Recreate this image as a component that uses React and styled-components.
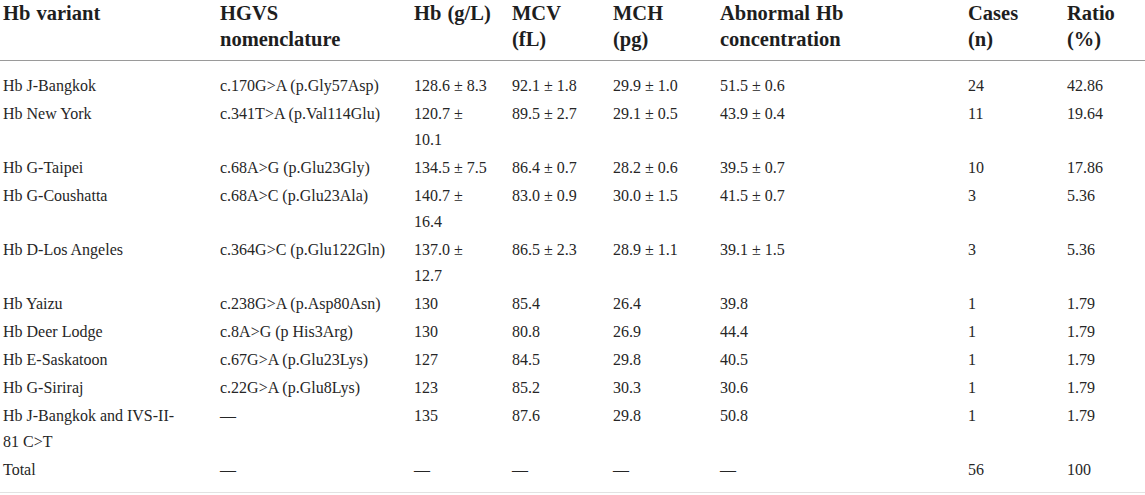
import React from "react";
import styled, { createGlobalStyle } from "styled-components";

const Global = createGlobalStyle`
  html, body { margin: 0; padding: 0; background: #fff; }
  body { font-family: "Liberation Serif", "Times New Roman", serif; }
`;

const Table = styled.table`
  width: 1145px;
  border-collapse: collapse;
  table-layout: fixed;
  color: #262626;
  border-bottom: 1px solid #e2e2e2;
`;

const Col = styled.col`
  width: ${(p) => p.$w}px;
`;

const HeadCell = styled.th`
  text-align: left;
  vertical-align: top;
  font-weight: 700;
  font-size: 20.5px;
  line-height: 26px;
  word-spacing: 1px;
  color: #1e1e1e;
  padding: 0 0 8px 3px;
  border-bottom: 1px solid #9a9a9a;
`;

const Row = styled.tr``;

const Cell = styled.td`
  vertical-align: top;
  font-size: 16px;
  line-height: 26px;
  padding: ${(p) => (p.$first ? "12px" : "1px")} 0 ${(p) => (p.$last ? "9px" : "1px")} 3px;
  white-space: nowrap;
`;

const widths = [217, 194, 98, 101, 107, 248, 99, 81];

const headers = [
  ["Hb variant"],
  ["HGVS", "nomenclature"],
  ["Hb (g/L)"],
  ["MCV", "(fL)"],
  ["MCH", "(pg)"],
  ["Abnormal Hb", "concentration"],
  ["Cases", "(n)"],
  ["Ratio", "(%)"],
];

const rows = [
  [["Hb J-Bangkok"], ["c.170G>A (p.Gly57Asp)"], ["128.6 ± 8.3"], ["92.1 ± 1.8"], ["29.9 ± 1.0"], ["51.5 ± 0.6"], ["24"], ["42.86"]],
  [["Hb New York"], ["c.341T>A (p.Val114Glu)"], ["120.7 ±", "10.1"], ["89.5 ± 2.7"], ["29.1 ± 0.5"], ["43.9 ± 0.4"], ["11"], ["19.64"]],
  [["Hb G-Taipei"], ["c.68A>G (p.Glu23Gly)"], ["134.5 ± 7.5"], ["86.4 ± 0.7"], ["28.2 ± 0.6"], ["39.5 ± 0.7"], ["10"], ["17.86"]],
  [["Hb G-Coushatta"], ["c.68A>C (p.Glu23Ala)"], ["140.7 ±", "16.4"], ["83.0 ± 0.9"], ["30.0 ± 1.5"], ["41.5 ± 0.7"], ["3"], ["5.36"]],
  [["Hb D-Los Angeles"], ["c.364G>C (p.Glu122Gln)"], ["137.0 ±", "12.7"], ["86.5 ± 2.3"], ["28.9 ± 1.1"], ["39.1 ± 1.5"], ["3"], ["5.36"]],
  [["Hb Yaizu"], ["c.238G>A (p.Asp80Asn)"], ["130"], ["85.4"], ["26.4"], ["39.8"], ["1"], ["1.79"]],
  [["Hb Deer Lodge"], ["c.8A>G (p His3Arg)"], ["130"], ["80.8"], ["26.9"], ["44.4"], ["1"], ["1.79"]],
  [["Hb E-Saskatoon"], ["c.67G>A (p.Glu23Lys)"], ["127"], ["84.5"], ["29.8"], ["40.5"], ["1"], ["1.79"]],
  [["Hb G-Siriraj"], ["c.22G>A (p.Glu8Lys)"], ["123"], ["85.2"], ["30.3"], ["30.6"], ["1"], ["1.79"]],
  [["Hb J-Bangkok and IVS-II-", "81 C>T"], ["—"], ["135"], ["87.6"], ["29.8"], ["50.8"], ["1"], ["1.79"]],
  [["Total"], ["—"], ["—"], ["—"], ["—"], ["—"], ["56"], ["100"]],
];

const Lines = ({ lines }) =>
  lines.map((l, i) => (
    <React.Fragment key={i}>
      {i > 0 && <br />}
      {l}
    </React.Fragment>
  ));

export default function App() {
  return (
    <>
      <Global />
      <Table>
        <colgroup>
          {widths.map((w, i) => (
            <Col key={i} $w={w} />
          ))}
        </colgroup>
        <thead>
          <tr>
            {headers.map((h, i) => (
              <HeadCell key={i}>
                <Lines lines={h} />
              </HeadCell>
            ))}
          </tr>
        </thead>
        <tbody>
          {rows.map((r, ri) => (
            <Row key={ri}>
              {r.map((c, ci) => (
                <Cell key={ci} $first={ri === 0} $last={ri === rows.length - 1}>
                  <Lines lines={c} />
                </Cell>
              ))}
            </Row>
          ))}
        </tbody>
      </Table>
    </>
  );
}
